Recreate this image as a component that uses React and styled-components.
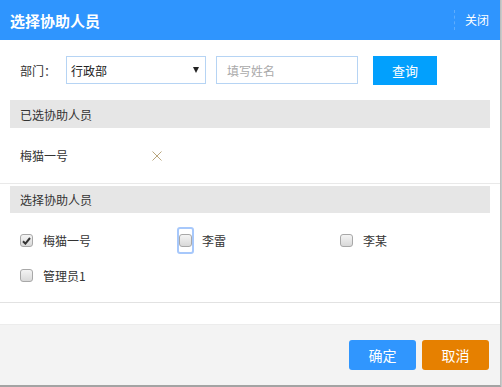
import React from "react";
import styled, { createGlobalStyle } from "styled-components";

const Global = createGlobalStyle`
  html, body { margin: 0; padding: 0; background: #c9c9c9; }
  body { font-family: "Noto Sans CJK SC", "Noto Sans", "Liberation Sans", sans-serif; }
  * { box-sizing: border-box; }
`;

const Dialog = styled.div`
  width: 501px;
  background: #fff;
  border-right: 1px solid #bdbdbd;
  border-bottom: 2px solid #a3a3a3;
  display: flex;
  flex-direction: column;
`;

const Header = styled.div`
  height: 40px;
  background: #2f95fe;
  display: flex;
  align-items: center;
  justify-content: space-between;
  padding: 0 11px 0 10px;
`;

const Title = styled.div`
  color: #fff;
  font-size: 15px;
  font-weight: 700;
  line-height: 1;
`;

const CloseWrap = styled.div`
  display: flex;
  align-items: center;
  height: 20px;
`;

const Sep = styled.span`
  width: 0;
  height: 20px;
  border-left: 1px dashed #5eadfe;
  margin-right: 10px;
`;

const Close = styled.span`
  color: #fff;
  font-size: 12px;
  line-height: 1;
`;

const SearchBar = styled.div`
  height: 60px;
  display: flex;
  align-items: center;
  padding-left: 20px;
`;

const Label = styled.span`
  width: 46px;
  font-size: 12px;
  color: #333;
`;

const Select = styled.div`
  width: 140px;
  height: 28px;
  border: 1px solid #b6d4f4;
  display: flex;
  align-items: center;
  justify-content: space-between;
  padding: 0 6px 0 4px;
  font-size: 12px;
  color: #222;
  margin-right: 10px;
`;

const Arrow = styled.span`
  width: 0;
  height: 0;
  border-left: 3.5px solid transparent;
  border-right: 3.5px solid transparent;
  border-top: 6px solid #222;
`;

const Input = styled.input`
  width: 142px;
  height: 28px;
  border: 1px solid #b6d4f4;
  padding: 0 10px;
  font-family: inherit;
  font-size: 12px;
  outline: none;
  margin-right: 15px;
  &::placeholder { color: #a9a9a9; }
`;

const Btn = styled.button`
  width: ${(p) => p.$w || 67}px;
  height: ${(p) => p.$h || 30}px;
  border: none;
  border-radius: ${(p) => p.$r || 0}px;
  background: ${(p) => p.$bg};
  color: #fff;
  font-family: inherit;
  font-size: ${(p) => p.$fs || 14}px;
  padding: 0;
  cursor: pointer;
`;

const SectionHead = styled.div`
  margin: 0 10px;
  height: ${(p) => p.$h}px;
  background: #e6e6e6;
  display: flex;
  align-items: center;
  padding-left: 10px;
  font-size: 12px;
  color: #333;
`;

const SelectedRow = styled.div`
  height: 56px;
  display: flex;
  align-items: center;
  padding-left: 20px;
  border-bottom: 1px solid #e9e9e9;
  margin-bottom: 2px;
  font-size: 12px;
  color: #333;
`;

const Name = styled.span`
  width: 132px;
`;

const Remove = styled.svg`
  width: 10px;
  height: 10px;
`;

const Grid = styled.div`
  display: grid;
  grid-template-columns: repeat(3, 160px);
  grid-auto-rows: 35px;
  padding: 10px 0 9px 20px;
  border-bottom: 1px solid #e2e2e2;
`;

const Item = styled.label`
  display: flex;
  align-items: center;
  font-size: 12px;
  color: #333;
  margin-left: ${(p) => p.$shift || 0}px;
`;

const Box = styled.span`
  position: relative;
  width: 13px;
  height: 13px;
  border: 1px solid #a8a8a8;
  border-radius: 3px;
  background: linear-gradient(#f4f4f4, #d9d9d9);
  margin-right: 10px;
  display: flex;
  align-items: center;
  justify-content: center;
  ${(p) =>
    p.$focus &&
    `&::before {
      content: "";
      position: absolute;
      left: -3px;
      top: -8px;
      right: -3px;
      bottom: -8px;
      border: 2px solid #a7c8fb;
      border-radius: 3px;
    }`}
`;

const Spacer = styled.div`
  height: 21px;
`;

const Footer = styled.div`
  height: 61px;
  background: #f3f3f3;
  border-top: 1px solid #ececec;
  display: flex;
  align-items: center;
  justify-content: flex-end;
  gap: 6px;
  padding-right: 11px;
`;

const Check = () => (
  <svg width="9" height="8" viewBox="0 0 9 8">
    <path d="M1 4.2 L3.4 6.6 L8 1" fill="none" stroke="#333" strokeWidth="2" />
  </svg>
);

const people = [
  { name: "梅猫一号", checked: true },
  { name: "李雷", focus: true, shift: -1 },
  { name: "李某" },
  { name: "管理员1" },
];

export default function App() {
  return (
    <>
      <Global />
      <Dialog>
        <Header>
          <Title>选择协助人员</Title>
          <CloseWrap>
            <Sep />
            <Close>关闭</Close>
          </CloseWrap>
        </Header>
        <SearchBar>
          <Label>部门：</Label>
          <Select>
            <span>行政部</span>
            <Arrow />
          </Select>
          <Input placeholder="填写姓名" />
          <Btn $bg="#02a0fd" $w={64} $h={29} $fs={13}>查询</Btn>
        </SearchBar>
        <SectionHead $h={28}>已选协助人员</SectionHead>
        <SelectedRow>
          <Name>梅猫一号</Name>
          <Remove viewBox="0 0 10 10">
            <path d="M0.5 0.5 L9.5 9.5 M9.5 0.5 L0.5 9.5" stroke="#b9a67e" strokeWidth="1" />
          </Remove>
        </SelectedRow>
        <SectionHead $h={27}>选择协助人员</SectionHead>
        <Grid>
          {people.map((p) => (
            <Item key={p.name} $shift={p.shift}>
              <Box $focus={p.focus}>{p.checked && <Check />}</Box>
              {p.name}
            </Item>
          ))}
        </Grid>
        <Spacer />
        <Footer>
          <Btn $bg="#3096fe" $r={3}>确定</Btn>
          <Btn $bg="#e68000" $r={3}>取消</Btn>
        </Footer>
      </Dialog>
    </>
  );
}
